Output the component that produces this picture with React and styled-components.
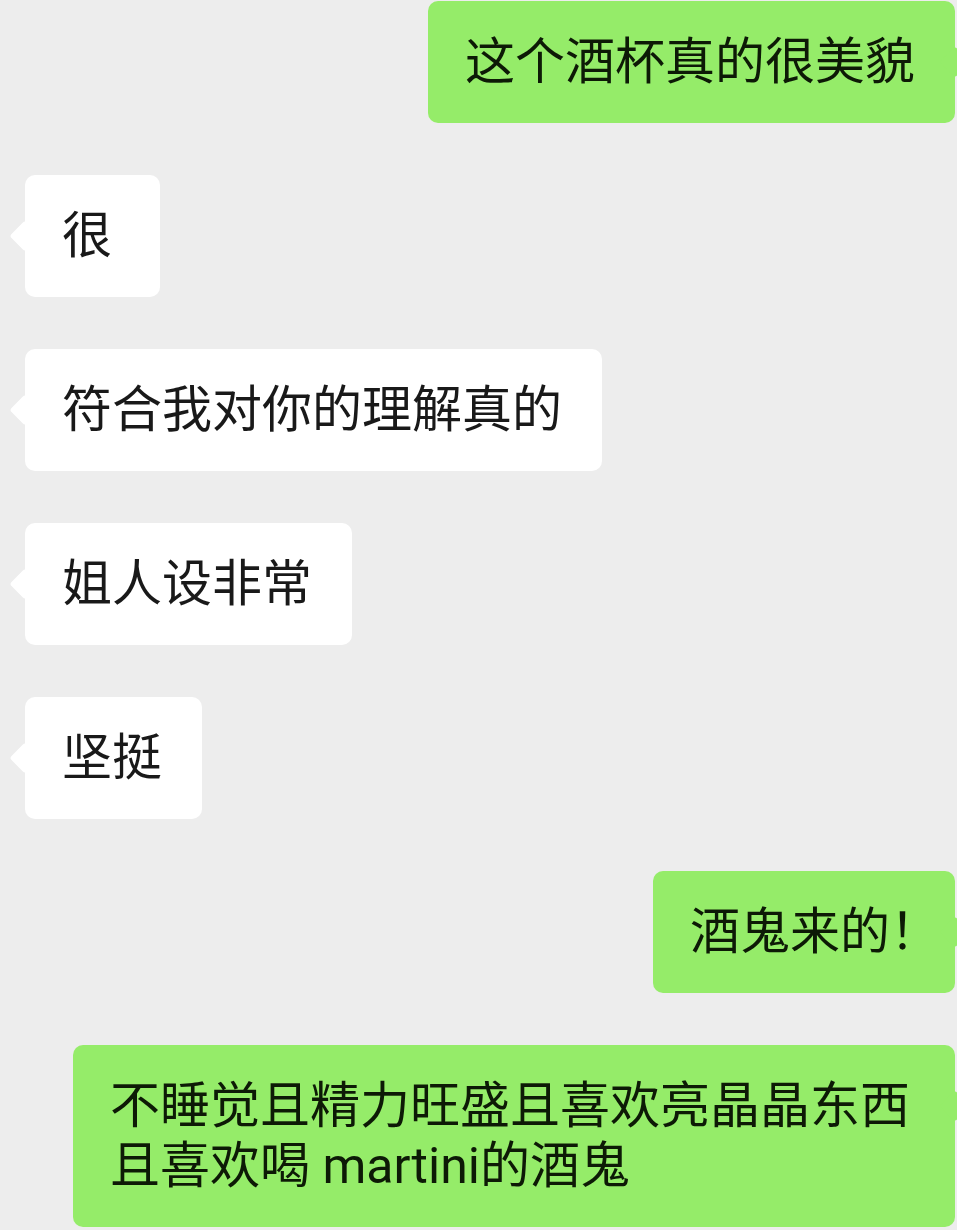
import React from "react";
import styled, { createGlobalStyle } from "styled-components";

const GlobalStyle = createGlobalStyle`
  html, body {
    margin: 0;
    padding: 0;
    background: #ededed;
  }
  body {
    font-family: Roboto, "Noto Sans CJK SC", sans-serif;
  }
`;

const Chat = styled.div`
  width: 957px;
  height: 1230px;
  overflow: hidden;
  box-sizing: border-box;
  padding: 1px 2px 0 25px;
  display: flex;
  flex-direction: column;
  gap: 52px;
  background: #ededed;
`;

const Row = styled.div`
  display: flex;
  justify-content: ${(p) => (p.$mine ? "flex-end" : "flex-start")};
`;

const Bubble = styled.div`
  position: relative;
  box-sizing: border-box;
  min-width: 135px;
  max-width: 882px;
  padding: 31px 40px 31px 37px;
  border-radius: 10px;
  background: ${(p) => (p.$mine ? "#95ec69" : "#ffffff")};
  color: ${(p) => (p.$mine ? "#0d1a06" : "#191919")};
  font-family: Roboto, "Noto Sans CJK SC", sans-serif;
  font-size: 50px;
  line-height: 60px;
  font-feature-settings: "halt";
  white-space: pre-wrap;
  word-break: break-all;

  &::before {
    content: "";
    position: absolute;
    top: 50px;
    ${(p) => (p.$mine ? "right: -11px;" : "left: -11px;")}
    width: 22px;
    height: 22px;
    border-radius: 3px;
    background: inherit;
    transform: rotate(45deg);
  }
`;

const messages = [
  { mine: true, text: "这个酒杯真的很美貌" },
  { mine: false, text: "很" },
  { mine: false, text: "符合我对你的理解真的" },
  { mine: false, text: "姐人设非常" },
  { mine: false, text: "坚挺" },
  { mine: true, text: "酒鬼来的！" },
  { mine: true, text: "不睡觉且精力旺盛且喜欢亮晶晶东西且喜欢喝 martini的酒鬼" },
];

export default function App() {
  return (
    <>
      <GlobalStyle />
      <Chat>
        {messages.map((m, i) => (
          <Row key={i} $mine={m.mine}>
            <Bubble $mine={m.mine}>{m.text}</Bubble>
          </Row>
        ))}
      </Chat>
    </>
  );
}
